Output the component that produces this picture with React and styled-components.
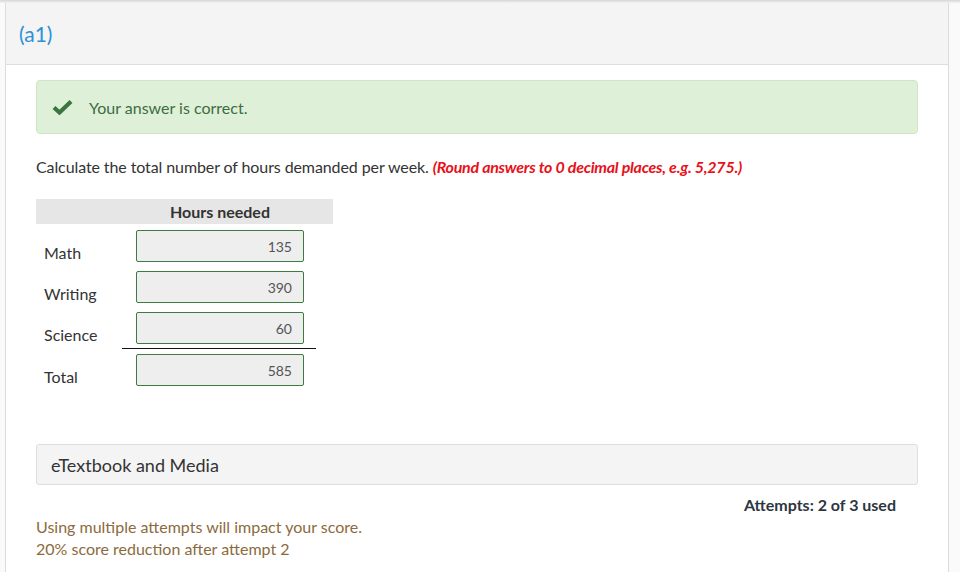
import React from "react";
import styled, { createGlobalStyle } from "styled-components";

const GlobalStyle = createGlobalStyle`
  html, body {
    margin: 0;
    padding: 0;
    background: #fafafa;
    font-family: Lato, "Open Sans", sans-serif;
    color: #333;
  }
`;

const TopShade = styled.div`
  height: 3px;
  background: linear-gradient(#d6d6d6, #f3f3f3);
`;

const Page = styled.div`
  padding-left: 5px;
  padding-right: 11px;
`;

const Panel = styled.section`
  background: #fff;
  border-left: 1px solid #dcdcdc;
  border-right: 1px solid #dcdcdc;
  min-height: 569px;
`;

const PanelHeader = styled.header`
  height: 61px;
  display: flex;
  align-items: center;
  padding-left: 13px;
  background: #f4f4f4;
  border-bottom: 1px solid #dedede;
  color: #2a91d9;
  font-size: 21px;
`;

const PanelBody = styled.div`
  padding: 15px 30px 0 30px;
`;

const SuccessBox = styled.div`
  box-sizing: border-box;
  height: 54px;
  display: flex;
  align-items: center;
  gap: 16px;
  padding-left: 15px;
  background: #dff0d8;
  border: 1px solid #cfe6c5;
  border-radius: 4px;
  color: #3d6c41;
  font-size: 16px;
`;

const Question = styled.p`
  margin: 23px 0 22px;
  font-size: 16px;
  line-height: 20px;
  letter-spacing: -0.1px;
  color: #333;
`;

const Hint = styled.span`
  color: #e8101a;
  font-weight: 700;
  font-style: italic;
  letter-spacing: -0.25px;
`;

const Table = styled.div`
  width: 297px;
  display: grid;
  grid-template-columns: 100px 168px 29px;
`;

const HeadCell = styled.div`
  height: 25px;
  background: #e6e6e6;
  display: flex;
  align-items: center;
  justify-content: center;
  font-size: 16px;
  font-weight: 700;
  color: #333;
`;

const Label = styled.div`
  height: 32px;
  margin-top: ${(p) => p.$top}px;
  padding-left: 8px;
  display: flex;
  align-items: flex-end;
  font-size: 16px;
  line-height: 19px;
  color: #333;
`;

const Input = styled.div`
  box-sizing: border-box;
  height: 32px;
  margin-top: ${(p) => p.$top}px;
  padding: 7px 11px 0 0;
  background: #eeeeee;
  border: 1px solid #3d7b3f;
  border-radius: 2px;
  text-align: right;
  font-size: 14px;
  color: #555;
`;

const SumLine = styled.div`
  grid-column: 1 / -1;
  margin: 4px 17px 0 86px;
  height: 1px;
  background: #111;
`;

const MediaBox = styled.div`
  margin-top: 58px;
  height: 39px;
  display: flex;
  align-items: center;
  padding-left: 14px;
  background: #f4f4f4;
  border: 1px solid #dedede;
  border-radius: 3px;
  font-size: 18px;
  color: #333;
`;

const Attempts = styled.div`
  margin-top: 10px;
  padding-right: 22px;
  text-align: right;
  font-size: 16px;
  line-height: 20px;
  font-weight: 700;
  color: #2d3640;
`;

const Notice = styled.p`
  margin: 1px 0 0;
  font-size: 16px;
  line-height: 22px;
  color: #8b6b3d;
`;

const CheckIcon = () => (
  <svg width="21" height="16" viewBox="0 0 21 16">
    <path d="M2 8.5l5.5 5L19 2.5" fill="none" stroke="#3b7541" strokeWidth="4.2" strokeLinejoin="miter" />
  </svg>
);

const rows = [
  { name: "Math", value: "135", top: 6 },
  { name: "Writing", value: "390", top: 9 },
  { name: "Science", value: "60", top: 9 },
];

export default function App() {
  return (
    <>
      <GlobalStyle />
      <TopShade />
      <Page>
        <Panel>
          <PanelHeader>(a1)</PanelHeader>
          <PanelBody>
            <SuccessBox>
              <CheckIcon />
              Your answer is correct.
            </SuccessBox>
            <Question>
              Calculate the total number of hours demanded per week.{" "}
              <Hint>(Round answers to 0 decimal places, e.g. 5,275.)</Hint>
            </Question>
            <Table>
              <HeadCell />
              <HeadCell>Hours needed</HeadCell>
              <HeadCell />
              {rows.map((r) => (
                <React.Fragment key={r.name}>
                  <Label $top={r.top}>{r.name}</Label>
                  <Input $top={r.top}>{r.value}</Input>
                  <div />
                </React.Fragment>
              ))}
              <SumLine />
              <Label $top={5}>Total</Label>
              <Input $top={5}>585</Input>
              <div />
            </Table>
            <MediaBox>eTextbook and Media</MediaBox>
            <Attempts>Attempts: 2 of 3 used</Attempts>
            <Notice>
              Using multiple attempts will impact your score.
              <br />
              20% score reduction after attempt 2
            </Notice>
          </PanelBody>
        </Panel>
      </Page>
    </>
  );
}
